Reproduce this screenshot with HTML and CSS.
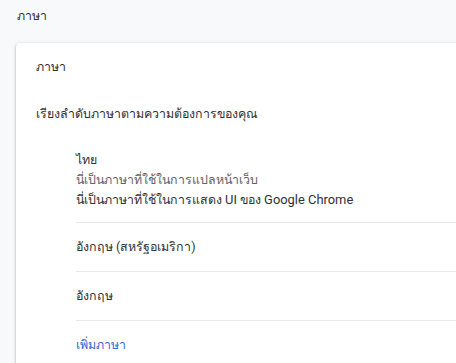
FILE: index.html
```html
<!DOCTYPE html>
<html lang="th">
<head>
    <meta charset="UTF-8">
    <meta name="viewport" content="width=device-width, initial-scale=1.0">
    <title>ภาษา</title>
    <link rel="stylesheet" href="styles.css">
</head>
<body>
    <div class="page-title">ภาษา</div>
    <div class="card">
        <div class="card-row">ภาษา</div>
        <div class="card-row">เรียงลำดับภาษาตามความต้องการของคุณ</div>
        <ul class="lang-list">
            <li class="lang-item">
                <div>ไทย</div>
                <div class="secondary">นี่เป็นภาษาที่ใช้ในการแปลหน้าเว็บ</div>
                <div>นี่เป็นภาษาที่ใช้ในการแสดง <span class="latin">UI</span> ของ <span class="latin">Google Chrome</span></div>
            </li>
            <li class="lang-item">อังกฤษ (สหรัฐอเมริกา)</li>
            <li class="lang-item">อังกฤษ</li>
            <li class="lang-item"><a class="add-link" href="#">เพิ่มภาษา</a></li>
        </ul>
    </div>
</body>
</html>
```

FILE: styles.css
```css
body {
    font-family: Roboto, "Noto Sans", "DejaVu Sans", sans-serif;
    font-size: 12.4px;
    line-height: 20px;
    color: #303134;
    margin: 0;
    padding: 0;
    background-color: #f8f9fa;
    overflow: hidden;
}
.page-title {
    padding: 6px 17px 0;
    height: 37px;
}
.card {
    margin-left: 16px;
    width: 700px;
    background: #fff;
    border-radius: 4px;
    box-shadow: 0 1px 2px 0 rgba(60,64,67,0.3), 0 1px 3px 1px rgba(60,64,67,0.15);
}
.card-row {
    display: flex;
    align-items: center;
    min-height: 47px;
    padding: 0 20px;
}
.lang-list {
    list-style-type: none;
    margin: 0;
    padding: 0 0 0 60px;
}
.lang-item {
    display: flex;
    flex-direction: column;
    justify-content: center;
    min-height: 48px;
    padding: 0;
    border-top: 1px solid #e8e8e8;
}
.lang-item:first-child {
    border-top: none;
    padding: 13px 0 12px;
}
.latin {
    font-size: 12.9px;
}
.secondary {
    color: #5f6368;
}
.add-link {
    color: #3367d6;
    text-decoration: none;
}
```
